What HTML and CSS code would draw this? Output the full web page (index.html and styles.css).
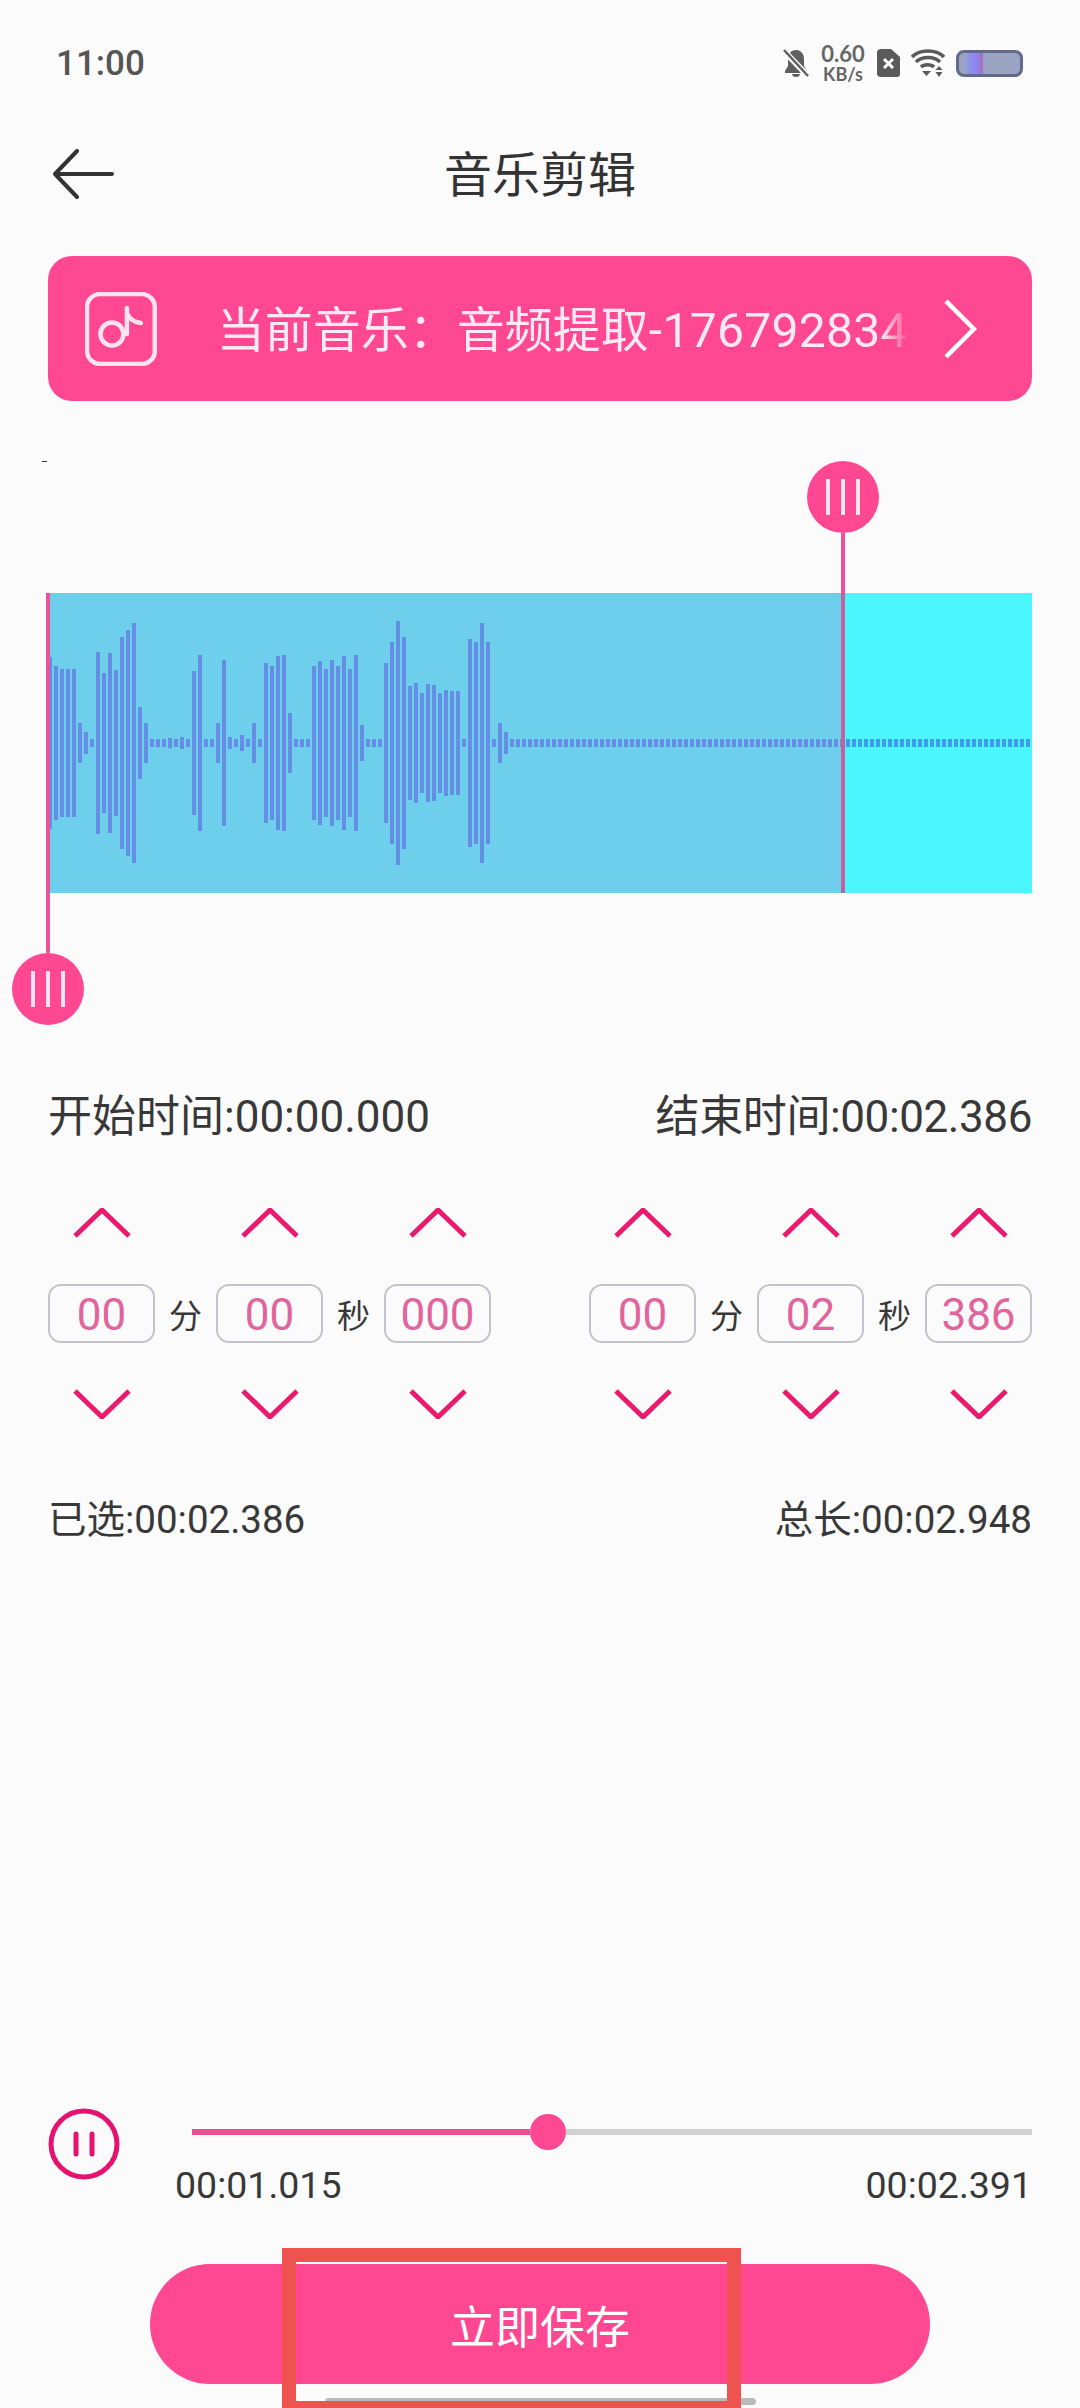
FILE: index.html
```html
<!DOCTYPE html>
<html lang="zh-CN">
<head>
  <meta charset="UTF-8" />
  <meta name="viewport" content="width=device-width, initial-scale=1.0" />
  <title>音乐剪辑</title>
  <link rel="stylesheet" href="styles.css">
</head>
<body>
  <svg class="defs" width="0" height="0">
    <symbol id="up" viewBox="0 0 58 30"><path d="M2 28 29 2l27 26" fill="none" stroke="#ec1a6c" stroke-width="5"/></symbol>
    <symbol id="down" viewBox="0 0 58 30"><path d="M2 2l27 26L56 2" fill="none" stroke="#ec1a6c" stroke-width="5"/></symbol>
  </svg>

  <div class="page">
    <div class="status">
      <span class="clock">11:00</span>
      <div class="status-icons">
        <svg width="26" height="30" viewBox="0 0 26 30">
          <path d="M13 2c5 0 8 4 8 9v7l3 5v2H2v-2l3-5v-7c0-5 3-9 8-9zM9 26h8c0 2-2 3-4 3s-4-1-4-3z" fill="#5f5f5f"/>
          <path d="M1 3l24 25" stroke="#fbfbfc" stroke-width="6"/>
          <path d="M1 2l24 26" stroke="#5f5f5f" stroke-width="2.5"/>
        </svg>
        <div class="speed"><span class="speed-num">0.60</span><span class="speed-unit">KB/s</span></div>
        <svg width="23" height="28" viewBox="0 0 23 28">
          <path d="M4 0h10l9 8v17c0 2-1 3-3 3H4c-2 0-4-1-4-3V3c0-2 2-3 4-3z" fill="#5a5a5a"/>
          <path d="M7 10l9 9m0-9l-9 9" stroke="#fff" stroke-width="3"/>
        </svg>
        <svg width="34" height="28" viewBox="0 0 34 28">
          <path d="M1 8c8-8 24-8 32 0M5 13c6-6 18-6 24 0M10 18c3-3 10-3 13 0" fill="none" stroke="#5a5a5a" stroke-width="3.5"/>
          <path d="M11 22h9l-4.500 5zM28 17l3.500 4h-7zM24.500 23h7L28 28z" fill="#5a5a5a"/>
        </svg>
        <div class="battery"><span class="battery-mark"></span></div>
      </div>
    </div>

    <div class="nav">
      <svg class="back" width="62" height="50" viewBox="0 0 62 50">
        <path d="M25 2 3 25l22 23M3 25h57" fill="none" stroke="#333" stroke-width="4" stroke-linecap="round" stroke-linejoin="round"/>
      </svg>
      <h1>音乐剪辑</h1>
    </div>

    <div class="banner">
      <svg class="note" width="72" height="74" viewBox="0 0 72 74">
        <rect x="2" y="2" width="68" height="70" rx="13" fill="none" stroke="#ffe3ef" stroke-width="4.500"/>
        <circle cx="27" cy="42" r="11.500" fill="none" stroke="#ffe3ef" stroke-width="4.500"/>
        <path d="M42 16v26M42 21c2 6 7 9 14 10" fill="none" stroke="#ffe3ef" stroke-width="4.500" stroke-linecap="round"/>
      </svg>
      <div class="track-name">当前音乐：音频提取<span class="track-id">-176792834</span></div>
      <svg width="34" height="60" viewBox="0 0 34 60">
        <path d="M3 2l28 28L3 58" fill="none" stroke="#fff" stroke-width="4.500"/>
      </svg>
    </div>

    <div class="editor">
      <span class="speck"></span>
      <div class="wave">
        <div class="wave-picked"></div>
        <div class="wave-rest"></div>
        <svg class="bars" width="984" height="300" viewBox="0 0 984 300">
          <path class="bars-picked" d="M2 64v172M8 73v154M14 76v148M20 76v148M26 76v148M32 130v40M38 139v22M44 146v8M50 59v182M56 80v140M62 60v180M68 77v146M74 44v212M80 37v226M86 30v240M92 114v72M98 130v40M104 146v8M110 146v8M116 146v8M122 145v10M128 146v8M134 144v12M140 146v8M146 78v144M152 62v176M158 146v8M164 146v8M170 130v40M176 67v166M182 144v12M188 146v8M194 142v16M200 146v8M206 130v40M212 146v8M218 70v160M224 73v154M230 63v174M236 62v176M242 120v60M248 146v8M254 146v8M260 146v8M266 73v154M272 68v164M278 76v148M284 67v166M290 73v154M296 63v174M302 76v148M308 62v176M314 132v36M320 146v8M326 146v8M332 146v8M338 70v160M344 49v202M350 28v244M356 44v212M362 93v114M368 90v120M374 100v100M380 91v118M386 92v116M392 100v100M398 97v106M404 98v104M410 98v104M416 146v8M422 46v208M428 49v202M434 30v240M440 49v202M446 146v8M452 130v40M458 139v22"/>
          <path class="bars-picked dots" d="M462 150H796"/>
          <path class="bars-rest dots" d="M798 150H982"/>
        </svg>
      </div>
      <div class="handle handle-end"><i></i><i></i><i></i></div>
      <div class="handle-line line-end"></div>
      <div class="handle-line line-start"></div>
      <div class="handle handle-start"><i></i><i></i><i></i></div>
    </div>

    <div class="times">
      <span>开始时间:00:00.000</span>
      <span class="time-end">结束时间:00:02.386</span>
    </div>

    <div class="stepper">
      <div class="group">
        <div class="col"><svg width="58" height="30"><use href="#up"/></svg><div class="box">00</div><svg width="58" height="30"><use href="#down"/></svg></div>
        <span class="unit">分</span>
        <div class="col"><svg width="58" height="30"><use href="#up"/></svg><div class="box">00</div><svg width="58" height="30"><use href="#down"/></svg></div>
        <span class="unit">秒</span>
        <div class="col"><svg width="58" height="30"><use href="#up"/></svg><div class="box">000</div><svg width="58" height="30"><use href="#down"/></svg></div>
      </div>
      <div class="group">
        <div class="col"><svg width="58" height="30"><use href="#up"/></svg><div class="box">00</div><svg width="58" height="30"><use href="#down"/></svg></div>
        <span class="unit">分</span>
        <div class="col"><svg width="58" height="30"><use href="#up"/></svg><div class="box">02</div><svg width="58" height="30"><use href="#down"/></svg></div>
        <span class="unit">秒</span>
        <div class="col"><svg width="58" height="30"><use href="#up"/></svg><div class="box">386</div><svg width="58" height="30"><use href="#down"/></svg></div>
      </div>
    </div>

    <div class="totals">
      <span>已选:00:02.386</span>
      <span>总长:00:02.948</span>
    </div>

    <div class="player">
      <svg width="72" height="72" viewBox="0 0 72 72">
        <circle cx="36" cy="36" r="33" fill="none" stroke="#e6126f" stroke-width="5"/>
        <path d="M28 26v20M44 26v20" stroke="#e6126f" stroke-width="5" stroke-linecap="round"/>
      </svg>
      <div class="player-main">
        <div class="slider">
          <div class="slider-done"></div>
          <div class="slider-thumb"></div>
          <div class="slider-left"></div>
        </div>
        <div class="player-times">
          <span>00:01.015</span>
          <span>00:02.391</span>
        </div>
      </div>
    </div>

    <button class="save" type="button">立即保存</button>

    <div class="home-bar"></div>
    <div class="mark"></div>
  </div>
</body>
</html>
```

FILE: styles.css
```css
html, body {
  margin: 0;
  padding: 0;
}

.defs {
  position: absolute;
}

.page {
  width: 1080px;
  height: 2408px;
  position: relative;
  overflow: hidden;
  display: flex;
  flex-direction: column;
  background: #fbfbfc;
  color: #383838;
  font-family: Roboto, "Noto Sans CJK SC", sans-serif;
}

/* status bar */
.status {
  height: 126px;
  padding: 0 57px 0 56px;
  display: flex;
  align-items: center;
  justify-content: space-between;
}

.clock {
  font-size: 35px;
  font-weight: 500;
  color: #555;
}

.status-icons {
  display: flex;
  align-items: center;
  gap: 11px;
}

.speed {
  width: 46px;
  display: flex;
  flex-direction: column;
  align-items: center;
  font-family: Lato, sans-serif;
  font-weight: 700;
  color: #666;
}

.speed-num {
  font-size: 22px;
  line-height: 22px;
}

.speed-unit {
  font-size: 18px;
  line-height: 19px;
}

.battery {
  width: 67px;
  height: 27px;
  box-sizing: border-box;
  border: 3px solid #5f6a8c;
  border-radius: 8px;
  background: #9ba3c3;
  position: relative;
}

.battery-mark {
  position: absolute;
  left: 8px;
  top: 0;
  width: 16px;
  height: 21px;
  background: linear-gradient(to right, #8f95ea, #8d84f2 60%, #a76fc0);
}

/* title */
.nav {
  height: 96px;
  position: relative;
  display: flex;
  align-items: center;
  justify-content: center;
}

.nav h1 {
  margin: 0 0 6px;
  font-size: 48px;
  font-weight: 400;
  color: #333;
}

.back {
  position: absolute;
  left: 52px;
  top: 23px;
}

/* current track */
.banner {
  height: 145px;
  margin: 34px 48px 0;
  padding: 0 55px 0 37px;
  border-radius: 24px;
  background: #ff4891;
  display: flex;
  align-items: center;
  color: #fff;
}

.track-name {
  width: 694px;
  margin: 0 34px 5px 60px;
  font-size: 48px;
  white-space: nowrap;
  overflow: hidden;
  color: #ffeaf3;
  -webkit-mask-image: linear-gradient(to right, #000 96%, transparent);
  mask-image: linear-gradient(to right, #000 96%, transparent);
}

.track-id {
  letter-spacing: 0.3px;
}

/* waveform */
.editor {
  height: 564px;
  margin-top: 60px;
  position: relative;
}

.speck {
  position: absolute;
  left: 42px;
  top: 0;
  width: 5px;
  height: 1px;
  background: #333;
}

.wave {
  position: absolute;
  left: 48px;
  top: 132px;
  width: 984px;
  height: 300px;
  display: flex;
}

.wave-picked {
  width: 795px;
  background: #6dcfeb;
  border-top: 2px solid #6dd0dc;
  box-sizing: border-box;
}

.wave-rest {
  flex: 1;
  background: #4bf6ff;
}

.bars {
  position: absolute;
  left: 0;
  top: 0;
}

.bars path {
  fill: none;
  stroke-width: 4;
}

.bars .bars-picked {
  stroke: #648ee3;
}

.bars .bars-rest {
  stroke: #3e9deb;
}

.bars .dots {
  stroke-width: 8;
  stroke-dasharray: 4 2;
}

.handle {
  position: absolute;
  width: 72px;
  height: 72px;
  border-radius: 50%;
  background: #ff4891;
  display: flex;
  align-items: center;
  justify-content: center;
  gap: 11px;
}

.handle i {
  width: 4px;
  height: 36px;
  background: #ffe3ef;
}

.handle-start {
  left: 12px;
  top: 492px;
}

.handle-end {
  left: 807px;
  top: 0;
}

.handle-line {
  position: absolute;
  width: 4px;
  background: #e8559a;
}

.line-start {
  left: 46px;
  top: 132px;
  height: 360px;
}

.line-end {
  left: 841px;
  top: 72px;
  height: 360px;
  background: linear-gradient(to bottom, #e8559a 60px, #c4609f 60px);
}

/* start / end times */
.times {
  margin-top: 62px;
  padding: 0 48px;
  display: flex;
  justify-content: space-between;
  font-size: 44px;
  line-height: 60px;
}

.time-end {
  letter-spacing: -0.4px;
}

.stepper {
  margin-top: 61px;
  padding: 0 48px;
  display: flex;
  justify-content: space-between;
}

.group {
  display: flex;
  align-items: center;
}

.col {
  width: 107px;
  display: flex;
  flex-direction: column;
  align-items: center;
  gap: 46px;
}

.box {
  width: 107px;
  height: 59px;
  box-sizing: border-box;
  border: 2px solid #c3c3cb;
  border-radius: 13px;
  font-size: 44px;
  line-height: 58px;
  text-align: center;
  color: #e2649d;
}

.unit {
  width: 61px;
  text-align: center;
  font-size: 33px;
}

.totals {
  margin-top: 76px;
  padding: 0 48px;
  display: flex;
  justify-content: space-between;
  font-size: 38.5px;
  line-height: 50px;
}

/* playback */
.player {
  margin-top: auto;
  padding: 0 48px;
  display: flex;
  gap: 55px;
}

.player-main {
  flex: 1;
  margin-top: 6px;
}

.slider {
  margin-left: 17px;
  height: 36px;
  display: flex;
  align-items: center;
}

.slider-done {
  width: 338px;
  height: 6px;
  background: #e8508f;
}

.slider-thumb {
  width: 36px;
  height: 36px;
  border-radius: 50%;
  background: #ff4891;
}

.slider-left {
  flex: 1;
  height: 6px;
  background: #d0d0d0;
}

.player-times {
  margin-top: 13px;
  display: flex;
  justify-content: space-between;
  font-size: 37.5px;
  line-height: 44px;
}

.save {
  width: 780px;
  height: 120px;
  margin: 57px auto 24px;
  padding: 0;
  border: none;
  border-radius: 60px;
  background: #ff4891;
  color: #fff;
  font-family: inherit;
  font-size: 45px;
}

.home-bar {
  position: absolute;
  left: 325px;
  top: 2398px;
  width: 431px;
  height: 7px;
  border-radius: 4px;
  background: #bbb;
}

/* red annotation box over the save button */
.mark {
  position: absolute;
  left: 282px;
  top: 2248px;
  width: 459px;
  height: 160px;
  box-sizing: border-box;
  border: 14px solid #ee5350;
  border-bottom-width: 7px;
}
```
